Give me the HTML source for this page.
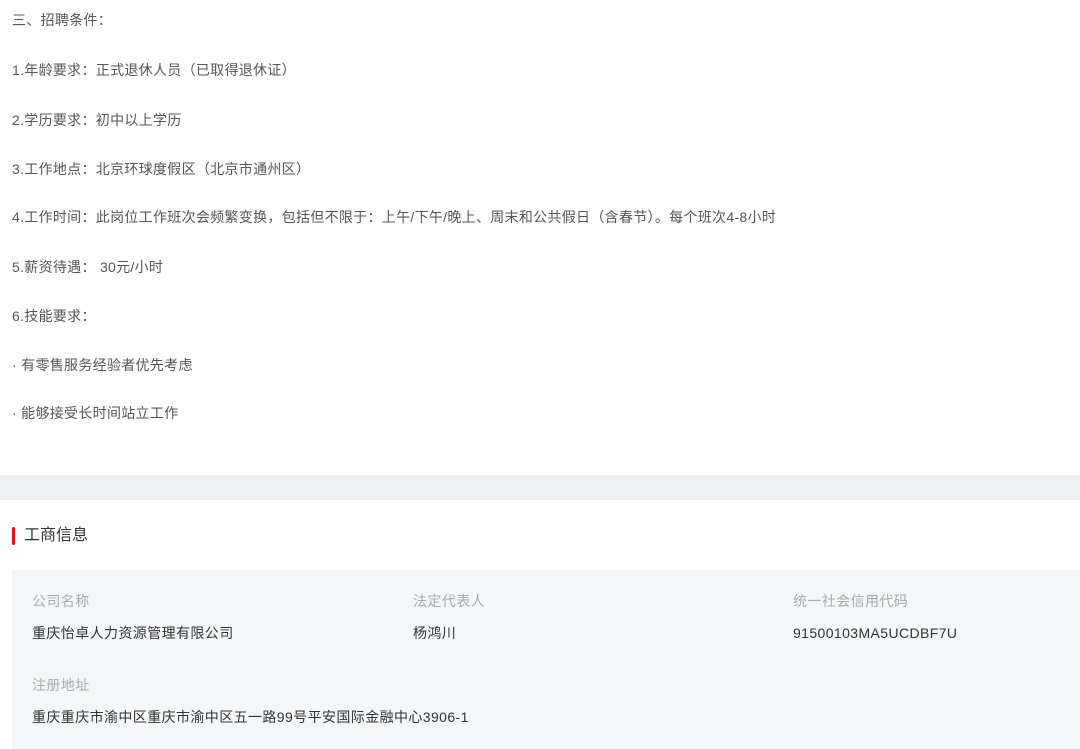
<!DOCTYPE html><html><head><meta charset="utf-8"><style>
body{margin:0;width:1080px;height:749px;background:#fff;font-family:"Liberation Sans","Noto Sans CJK SC",sans-serif;overflow:hidden;position:relative}
.t{position:absolute;left:12px;font-size:14px;letter-spacing:.3px;color:#555;line-height:20px;white-space:nowrap}
.band{position:absolute;left:0;top:475px;width:1080px;height:25px;background:#eef0f2}
.bar{position:absolute;left:12px;top:527px;width:3px;height:18px;background:#e0101e;border-radius:2px}
.h{position:absolute;left:24px;top:525px;font-size:16px;color:#333;line-height:22px}
.box{position:absolute;left:12px;top:570px;width:1068px;height:179px;background:#f5f6f7}
.l{position:absolute;font-size:14px;letter-spacing:.4px;color:#aaa;line-height:20px;white-space:nowrap}
.v{position:absolute;font-size:14px;letter-spacing:.4px;color:#333;line-height:20px;white-space:nowrap}
</style></head><body>
<div class="t" style="top:10px">三、招聘条件：</div>
<div class="t" style="top:60px">1.年龄要求：正式退休人员（已取得退休证）</div>
<div class="t" style="top:110px">2.学历要求：初中以上学历</div>
<div class="t" style="top:159px">3.工作地点：北京环球度假区（北京市通州区）</div>
<div class="t" style="top:207px">4.工作时间：此岗位工作班次会频繁变换，包括但不限于：上午/下午/晚上、周末和公共假日（含春节）。每个班次4-8小时</div>
<div class="t" style="top:257px">5.薪资待遇： 30元/小时</div>
<div class="t" style="top:306px">6.技能要求：</div>
<div class="t" style="top:355px">· 有零售服务经验者优先考虑</div>
<div class="t" style="top:403px">· 能够接受长时间站立工作</div>
<div class="band"></div>
<div class="bar"></div><div class="h">工商信息</div>
<div class="box"></div>
<div class="l" style="left:32px;top:591px">公司名称</div>
<div class="l" style="left:413px;top:591px">法定代表人</div>
<div class="l" style="left:793px;top:591px">统一社会信用代码</div>
<div class="v" style="left:32px;top:623px">重庆怡卓人力资源管理有限公司</div>
<div class="v" style="left:413px;top:623px">杨鸿川</div>
<div class="v" style="left:793px;top:623px">91500103MA5UCDBF7U</div>
<div class="l" style="left:32px;top:675px">注册地址</div>
<div class="v" style="left:32px;top:707px">重庆重庆市渝中区重庆市渝中区五一路99号平安国际金融中心3906-1</div>
</body></html>
